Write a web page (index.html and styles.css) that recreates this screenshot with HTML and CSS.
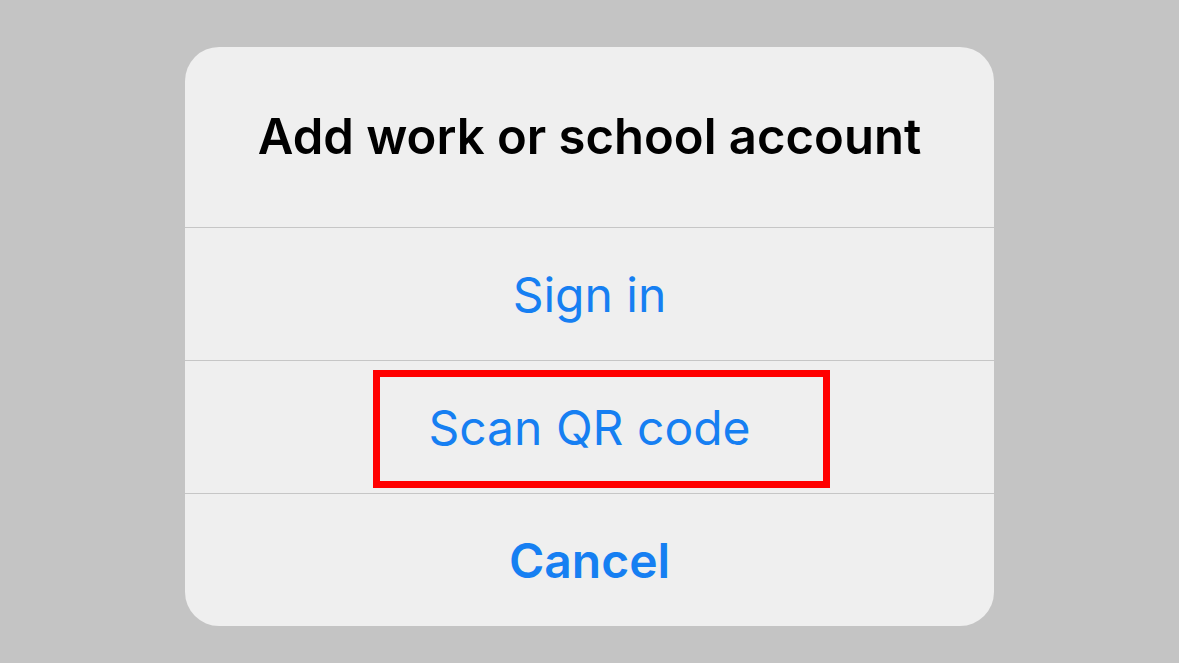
FILE: index.html
```html
<!doctype html>
<html lang="en">
    <head>
        <meta charset="UTF-8" />
        <meta name="viewport" content="width=device-width, initial-scale=1.0" />
        <title>Add work or school account</title>
        <link rel="stylesheet" href="styles.css">
    </head>
    <body>
        <div class="sheet">
            <div class="sheet-title">Add work or school account</div>
            <div class="sheet-action">Sign in</div>
            <div class="sheet-action highlighted">
                Scan QR code
                <span class="highlight-box"></span>
            </div>
            <div class="sheet-action cancel">Cancel</div>
        </div>
    </body>
</html>
```

FILE: styles.css
```css
body {
    margin: 0;
    height: 663px;
    background-color: #c4c4c4;
    font-family: Inter, "Noto Sans", sans-serif;
    display: flex;
    justify-content: center;
    align-items: flex-start;
    padding-top: 47px;
    box-sizing: border-box;
    overflow: hidden;
}
.sheet {
    width: 809px;
    height: 579px;
    background-color: #efefef;
    border-radius: 34px;
    display: flex;
    flex-direction: column;
    overflow: hidden;
}
.sheet-title {
    height: 180px;
    display: flex;
    align-items: center;
    justify-content: center;
    font-size: 49px;
    font-weight: 600;
    color: #000;
    padding-bottom: 2px;
    box-sizing: border-box;
}
.sheet-action {
    position: relative;
    height: 133px;
    border-top: 1px solid #c6c6c6;
    display: flex;
    align-items: center;
    justify-content: center;
    font-size: 48px;
    color: #167ff2;
    box-sizing: border-box;
}
.sheet-action.cancel {
    font-weight: 600;
}
.highlight-box {
    position: absolute;
    top: 9px;
    left: 188px;
    width: 457px;
    height: 118px;
    border: 7px solid #ff0000;
    box-sizing: border-box;
}
```
